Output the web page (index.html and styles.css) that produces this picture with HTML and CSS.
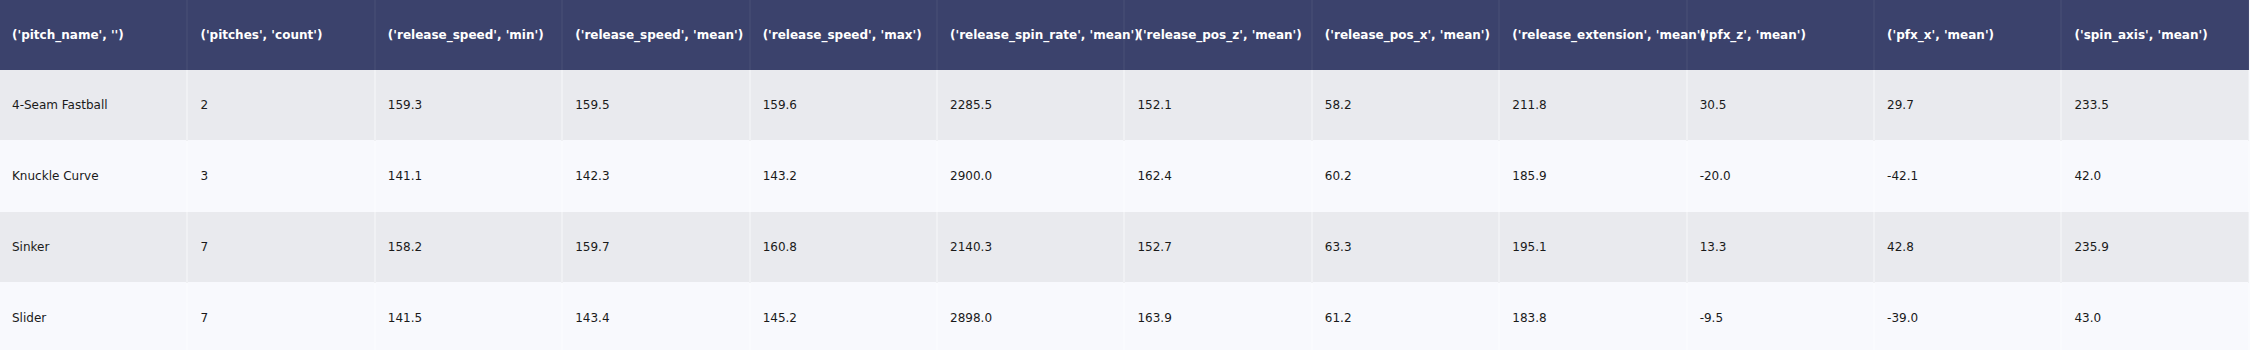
FILE: index.html
```html
<!DOCTYPE html>
<html lang="en">
<head>
    <meta charset="UTF-8">
    <title>Pitch summary</title>
    <link rel="stylesheet" href="styles.css">
</head>
<body>
    <table class="stats">
        <thead>
            <tr>
                <th>('pitch_name', '')</th>
                <th>('pitches', 'count')</th>
                <th>('release_speed', 'min')</th>
                <th>('release_speed', 'mean')</th>
                <th>('release_speed', 'max')</th>
                <th>('release_spin_rate', 'mean')</th>
                <th>('release_pos_z', 'mean')</th>
                <th>('release_pos_x', 'mean')</th>
                <th>('release_extension', 'mean')</th>
                <th>('pfx_z', 'mean')</th>
                <th>('pfx_x', 'mean')</th>
                <th>('spin_axis', 'mean')</th>
            </tr>
        </thead>
        <tbody>
            <tr>
                <td>4-Seam Fastball</td><td>2</td><td>159.3</td><td>159.5</td><td>159.6</td><td>2285.5</td>
                <td>152.1</td><td>58.2</td><td>211.8</td><td>30.5</td><td>29.7</td><td>233.5</td>
            </tr>
            <tr>
                <td>Knuckle Curve</td><td>3</td><td>141.1</td><td>142.3</td><td>143.2</td><td>2900.0</td>
                <td>162.4</td><td>60.2</td><td>185.9</td><td>-20.0</td><td>-42.1</td><td>42.0</td>
            </tr>
            <tr>
                <td>Sinker</td><td>7</td><td>158.2</td><td>159.7</td><td>160.8</td><td>2140.3</td>
                <td>152.7</td><td>63.3</td><td>195.1</td><td>13.3</td><td>42.8</td><td>235.9</td>
            </tr>
            <tr>
                <td>Slider</td><td>7</td><td>141.5</td><td>143.4</td><td>145.2</td><td>2898.0</td>
                <td>163.9</td><td>61.2</td><td>183.8</td><td>-9.5</td><td>-39.0</td><td>43.0</td>
            </tr>
        </tbody>
    </table>
</body>
</html>
```

FILE: styles.css
```css
body {
    margin: 0;
    padding: 0;
    background-color: #f8f9fd;
    font-family: 'DejaVu Sans', Verdana, sans-serif;
    font-size: 12px;
    color: #1a1a1a;
}

.stats {
    width: 2250px;
    table-layout: fixed;
    border-collapse: collapse;
}

.stats th,
.stats td {
    height: 70px;
    padding: 0 12px;
    text-align: left;
    white-space: nowrap;
    overflow: visible;
    border-right: 2px solid rgba(255, 255, 255, 0.35);
}

.stats th {
    background-color: #3b426c;
    color: #ffffff;
    font-weight: bold;
    border-right-color: rgba(255, 255, 255, 0.04);
}

.stats tbody tr:nth-child(odd) {
    background-color: #e9eaee;
}

.stats tbody tr:nth-child(even) {
    background-color: #f8f9fd;
}

.stats tbody tr + tr {
    border-top: 1px solid #f8f9fd;
}
```
